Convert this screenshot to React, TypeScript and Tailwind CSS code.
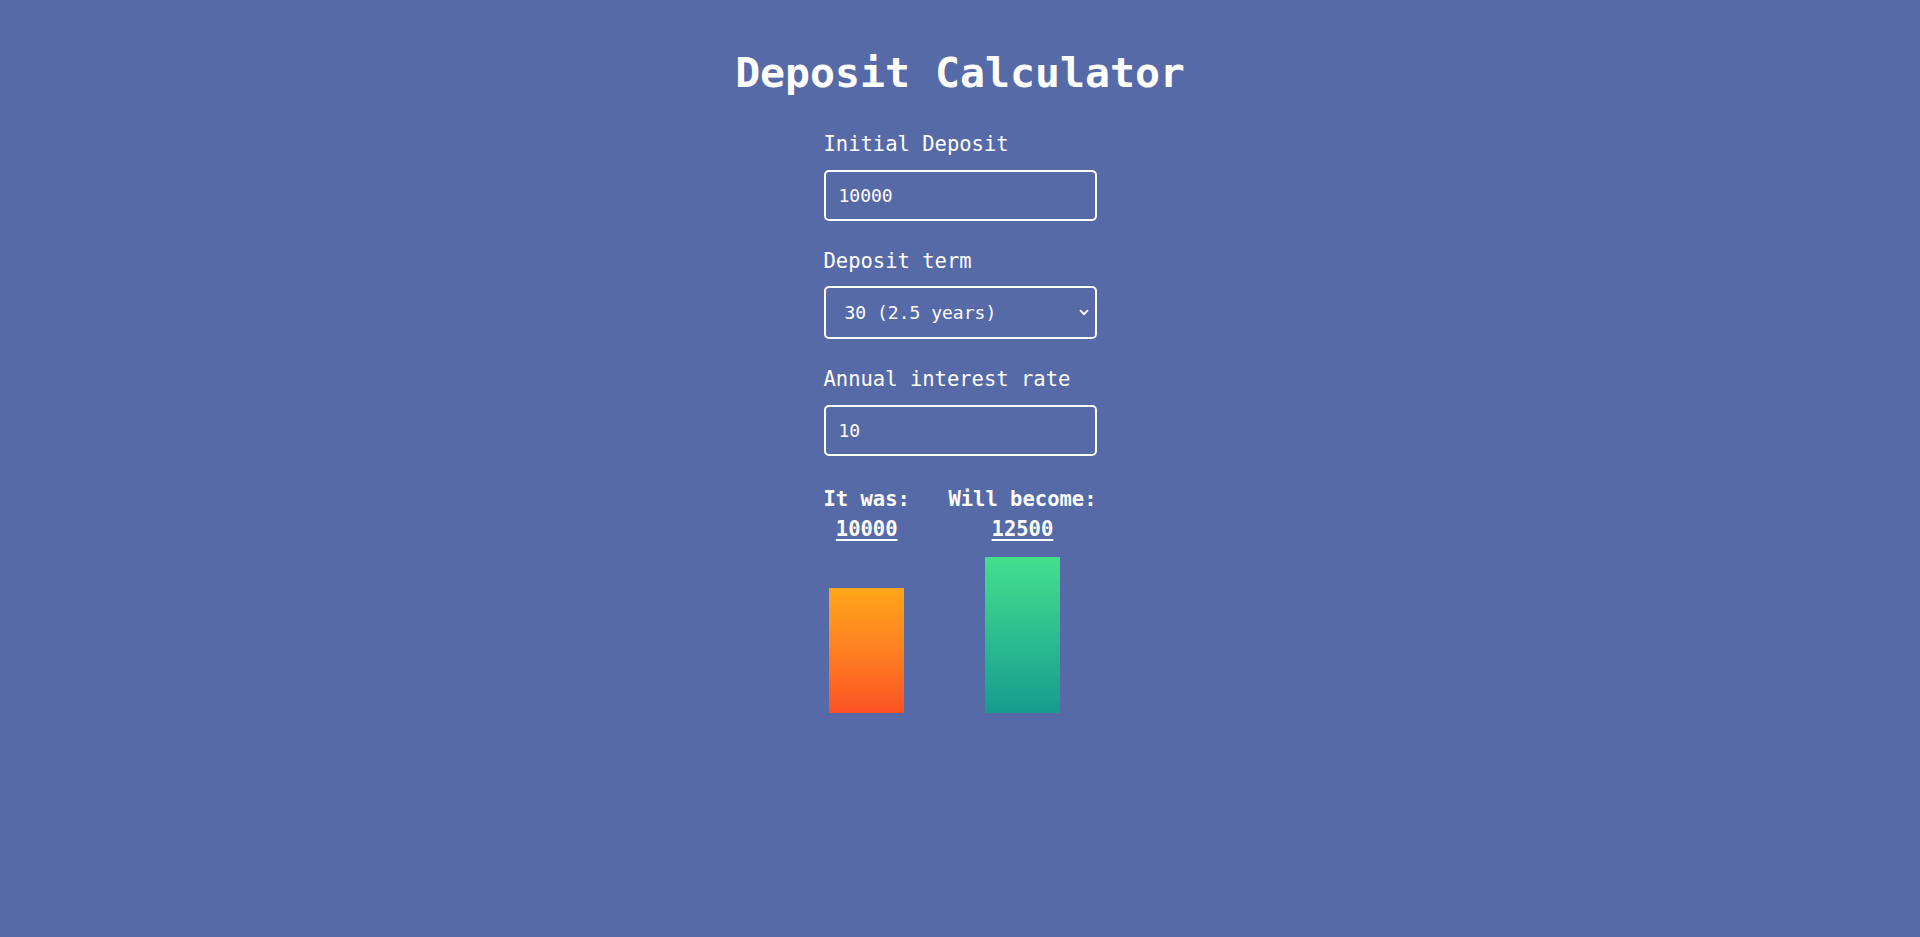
import { useState } from 'react';

const terms = [
  { months: 6, label: '6 (0.5 years)' },
  { months: 12, label: '12 (1 year)' },
  { months: 18, label: '18 (1.5 years)' },
  { months: 24, label: '24 (2 years)' },
  { months: 30, label: '30 (2.5 years)' },
  { months: 36, label: '36 (3 years)' },
];

export default function App() {
  const [deposit, setDeposit] = useState('10000');
  const [term, setTerm] = useState(30);
  const [rate, setRate] = useState('10');

  const initial = Number(deposit) || 0;
  const result = Math.round(initial + (initial * (Number(rate) || 0) * (term / 12)) / 100);

  return (
    <div className="min-h-[937px] bg-[#566aa7] pt-[49px] font-['DejaVu_Sans_Mono',monospace] text-white">
      <h1 className="text-center text-[41.5px] font-bold leading-[48px]">Deposit Calculator</h1>

      <div className="mx-auto mt-[35px] w-[273px]">
        <label className="block text-[20.5px] leading-[24px]" htmlFor="deposit">
          Initial Deposit
        </label>
        <input
          id="deposit"
          value={deposit}
          onChange={(e) => setDeposit(e.target.value)}
          className="mt-[14px] block h-[51px] w-full rounded-[5px] border-2 border-white bg-transparent pl-[13px] text-[18px] outline-none"
        />

        <label className="mt-[28px] block text-[20.5px] leading-[24px]" htmlFor="term">
          Deposit term
        </label>
        <div className="relative mt-[13px]">
          <select
            id="term"
            value={term}
            onChange={(e) => setTerm(Number(e.target.value))}
            className="block h-[53px] w-full appearance-none rounded-[5px] border-2 border-white bg-transparent pl-[19px] text-[18px] outline-none"
          >
            {terms.map((t) => (
              <option key={t.months} value={t.months} className="text-black">
                {t.label}
              </option>
            ))}
          </select>
          <svg
            className="pointer-events-none absolute right-[8px] top-[23px]"
            width="10"
            height="7"
            viewBox="0 0 10 7"
            fill="none"
          >
            <path d="M1 1.2 5 5.2 9 1.2" stroke="white" strokeWidth="1.8" />
          </svg>
        </div>

        <label className="mt-[28px] block text-[20.5px] leading-[24px]" htmlFor="rate">
          Annual interest rate
        </label>
        <input
          id="rate"
          value={rate}
          onChange={(e) => setRate(e.target.value)}
          className="mt-[14px] block h-[51px] w-full rounded-[5px] border-2 border-white bg-transparent pl-[13px] text-[18px] outline-none"
        />

        <div className="mt-[28px] flex justify-between">
          <ResultColumn title="It was:" value={initial} barClass="from-[#ffa61a] to-[#fb5023]" />
          <ResultColumn title="Will become:" value={result} barClass="from-[#43e08c] to-[#159c8e]" />
        </div>
      </div>
    </div>
  );
}

function ResultColumn({ title, value, barClass }: { title: string; value: number; barClass: string }) {
  return (
    <div className="flex flex-col items-center">
      <div className="text-[20.5px] font-bold leading-[30px]">{title}</div>
      <div className="text-[20.5px] font-bold leading-[30px] underline decoration-2 underline-offset-[3px]">
        {value}
      </div>
      <div className="flex h-[169px] items-end">
        <div className={`w-[75px] bg-linear-to-b ${barClass}`} style={{ height: value / 80 }} />
      </div>
    </div>
  );
}
